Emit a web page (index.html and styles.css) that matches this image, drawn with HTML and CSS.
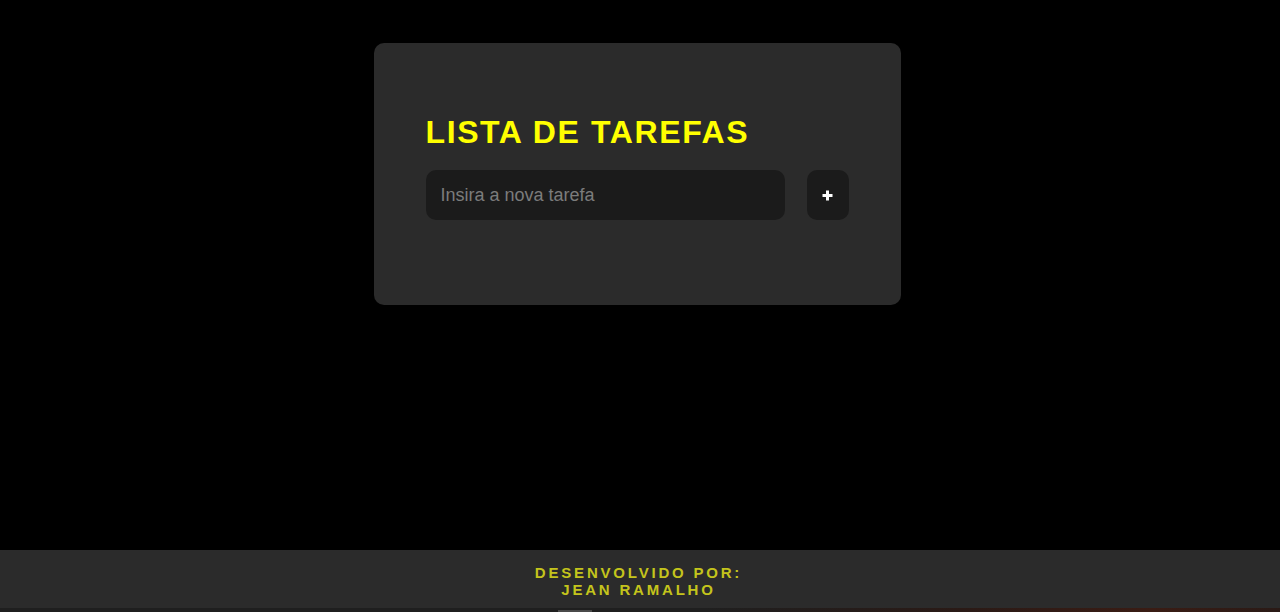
FILE: index.html
```html
<!DOCTYPE html>
<html lang="pt-BR">
<head>
<meta charset="UTF-8">
<title>Lista de Tarefas</title>
<link rel="stylesheet" href="styles.css">
</head>
<body>
<div class="page">
  <main class="main">
    <section class="card">
      <h1 class="title">LISTA DE TAREFAS</h1>
      <form class="row" onsubmit="return false">
        <input class="task-input" type="text" placeholder="Insira a nova tarefa">
        <button class="add-btn" type="submit" aria-label="Adicionar">
          <svg width="11" height="11" viewBox="0 0 11 11" aria-hidden="true">
            <rect x="4" y="0.5" width="3" height="10" fill="#ffffff"/>
            <rect x="0.5" y="4" width="10" height="3" fill="#ffffff"/>
          </svg>
        </button>
      </form>
    </section>
  </main>
  <footer class="footer">
    <p class="credit">DESENVOLVIDO POR:<br>JEAN RAMALHO</p>
  </footer>
  <div class="underlay"><span class="underlay-tab"></span></div>
</div>
</body>
</html>
```
FILE: styles.css
```css
* { box-sizing: border-box; }
html, body { margin: 0; padding: 0; }
body {
  background: #000;
  font-family: "Liberation Sans", Arial, sans-serif;
  overflow: hidden;
}
.page {
  min-height: 100vh;
  display: flex;
  flex-direction: column;
}
.main {
  flex: 1;
  display: flex;
  justify-content: center;
  align-items: flex-start;
  padding-top: 43px;
  padding-right: 6px;
}
.card {
  width: 527px;
  height: 262px;
  background: #2b2b2b;
  border-radius: 10px;
  padding: 71px 52px 0 52px;
}
.title {
  margin: 0 0 19px 0;
  font-size: 32px;
  line-height: 37px;
  font-weight: 700;
  letter-spacing: 1.6px;
  color: #ffff00;
}
.row {
  display: flex;
  gap: 22px;
  margin: 0;
}
.task-input {
  width: 359px;
  height: 50px;
  border: none;
  outline: none;
  border-radius: 10px;
  background: #1b1b1b;
  color: #ddd;
  font-family: "Liberation Sans", Arial, sans-serif;
  font-size: 18px;
  padding: 0 15px;
}
.task-input::placeholder { color: #7c7c7c; }
.add-btn {
  width: 42px;
  height: 50px;
  border: none;
  border-radius: 10px;
  background: #1b1b1b;
  display: flex;
  align-items: center;
  justify-content: center;
  padding: 0;
  cursor: pointer;
}
.footer {
  height: 58px;
  background: #2b2b2b;
  display: flex;
  justify-content: center;
  padding-top: 14px;
  padding-right: 6px;
}
.credit {
  margin: 0;
  text-align: center;
  font-size: 15px;
  line-height: 17px;
  font-weight: 700;
  letter-spacing: 2.8px;
  color: #c4c41c;
  padding-left: 3px;
}
.underlay {
  height: 4px;
  background: linear-gradient(90deg, #1f1f1f 0%, #1f1f1f 55%, #2a1a16 75%, #3a1c14 90%, #2a1a16 100%);
  display: flex;
  justify-content: flex-start;
  padding-left: 558px;
}
.underlay-tab {
  width: 34px;
  height: 2px;
  margin-top: 2px;
  background: #4a4a4a;
}
```
